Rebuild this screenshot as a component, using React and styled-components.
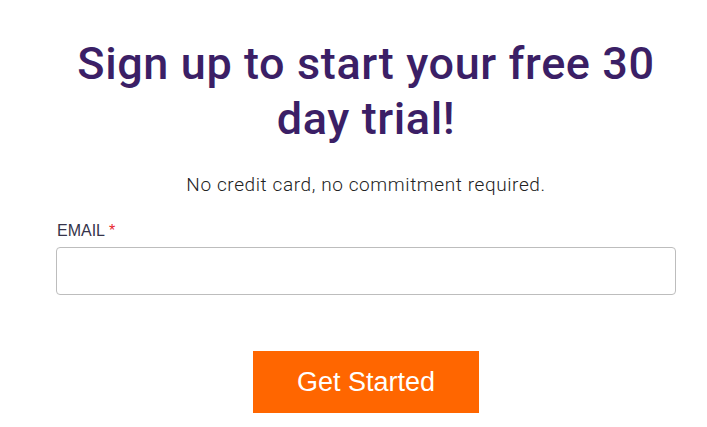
import React from "react";
import styled, { createGlobalStyle } from "styled-components";

const Global = createGlobalStyle`
  html, body { margin: 0; padding: 0; background: #ffffff; }
  * { box-sizing: border-box; }
`;

const Page = styled.div`
  width: 707px;
  height: 427px;
  padding: 36px 31px 0 56px;
  overflow: hidden;
`;

const Heading = styled.h1`
  margin: 0;
  font-family: Roboto, "Noto Sans", sans-serif;
  font-weight: 500;
  font-size: 45px;
  line-height: 55px;
  letter-spacing: 0.6px;
  color: #3b1f66;
  text-align: center;
  padding: 0 10px;
`;

const Subtitle = styled.p`
  margin: 25px 0 0;
  font-family: Roboto, "Noto Sans", sans-serif;
  font-weight: 300;
  font-size: 19px;
  line-height: 27px;
  letter-spacing: 0.6px;
  color: #222222;
  text-align: center;
`;

const Form = styled.form`
  display: flex;
  flex-direction: column;
  margin-top: 23px;
`;

const Label = styled.label`
  font-family: "Liberation Sans", Arial, sans-serif;
  font-size: 16px;
  line-height: 20px;
  color: #35334a;
  padding-left: 1px;
`;

const Req = styled.span`
  color: #e8262c;
`;

const Input = styled.input`
  margin-top: 6px;
  width: 620px;
  height: 48px;
  border: 1px solid #bdbdbd;
  border-radius: 4px;
  background: #fff;
  outline: none;
`;

const Button = styled.button`
  align-self: center;
  margin-top: 56px;
  width: 226px;
  height: 62px;
  border: none;
  border-radius: 0;
  background: #ff6600;
  color: #ffffff;
  font-family: "Liberation Sans", Arial, sans-serif;
  font-size: 27px;
  cursor: pointer;
`;

export default function App() {
  return (
    <>
      <Global />
      <Page>
        <Heading>Sign up to start your free 30 day trial!</Heading>
        <Subtitle>No credit card, no commitment required.</Subtitle>
        <Form onSubmit={(e) => e.preventDefault()}>
          <Label htmlFor="email">
            EMAIL <Req>*</Req>
          </Label>
          <Input id="email" type="email" />
          <Button type="submit">Get Started</Button>
        </Form>
      </Page>
    </>
  );
}
